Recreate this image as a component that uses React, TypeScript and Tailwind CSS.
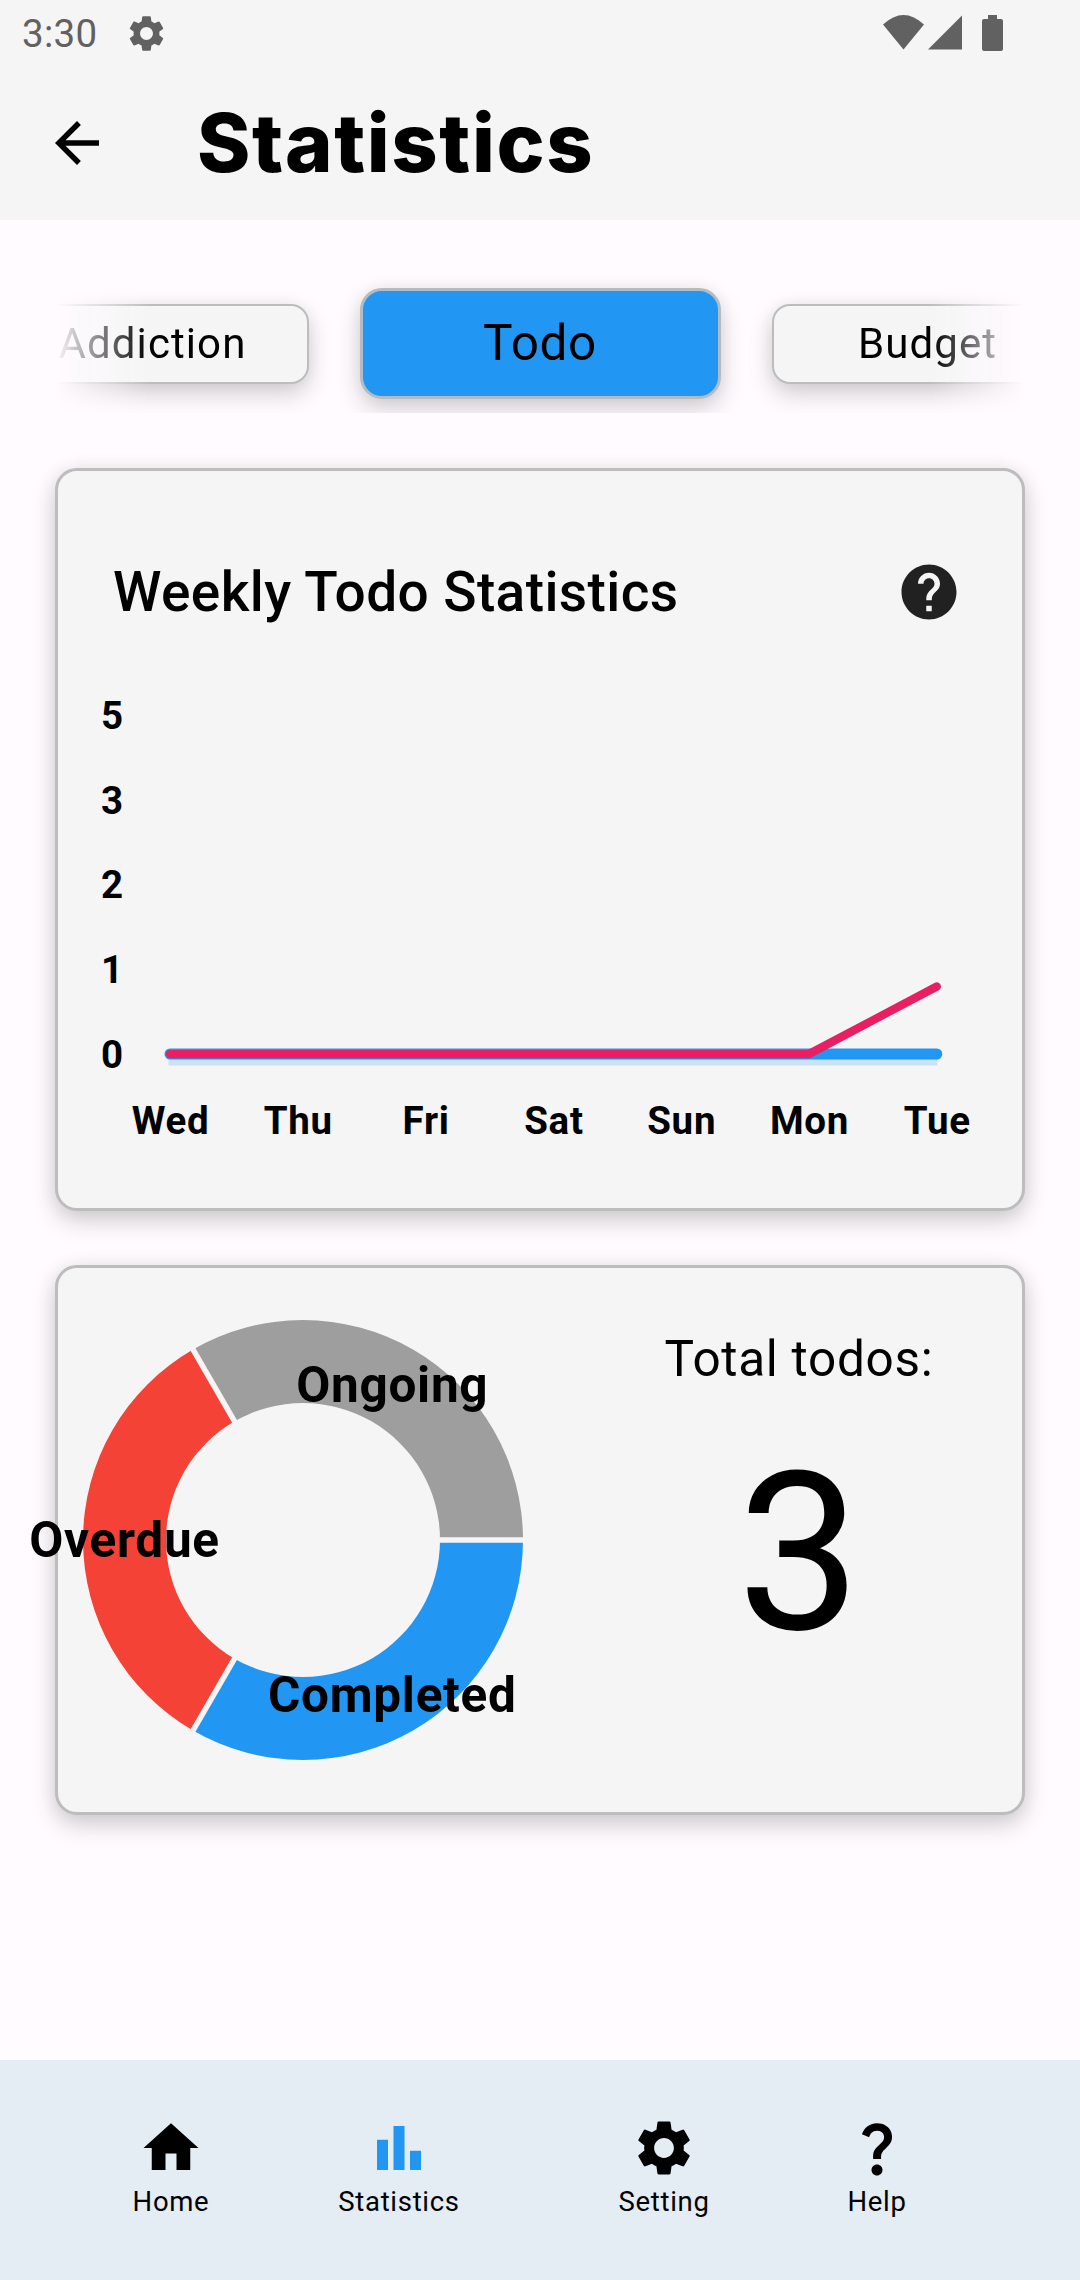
import type { ReactNode } from 'react'
import { MdArrowBack, MdBarChart, MdHelp, MdHome, MdQuestionMark, MdSettings } from 'react-icons/md'

const POINTS = [
  { day: 'Wed', done: 0, overdue: 0 },
  { day: 'Thu', done: 0, overdue: 0 },
  { day: 'Fri', done: 0, overdue: 0 },
  { day: 'Sat', done: 0, overdue: 0 },
  { day: 'Sun', done: 0, overdue: 0 },
  { day: 'Mon', done: 0, overdue: 0 },
  { day: 'Tue', done: 0, overdue: 1 },
]

const Y_LABELS = ['5', '3', '2', '1', '0']

// angles are clockwise from 3 o'clock, each slice spans a third
const SLICES = [
  { label: 'Completed', color: '#2196f3', from: 0 },
  { label: 'Overdue', color: '#f44336', from: 120 },
  { label: 'Ongoing', color: '#9e9e9e', from: 240 },
]

const SHADOW = 'shadow-[0_10px_24px_rgba(0,0,0,0.18),0_0_20px_rgba(0,0,0,0.06)]'

export default function App() {
  return (
    <div className="flex h-[2280px] w-[1080px] flex-col overflow-hidden bg-[#fffbff] font-[Roboto,sans-serif] text-black">
      <header className="h-[220px] bg-[#f5f5f5]">
        <StatusBar />
        <div className="flex h-[150px] items-center pl-[44px]">
          <MdArrowBack size={66} />
          <h1 className="ml-[87px] font-[Inter,sans-serif] text-[81px] leading-none font-extrabold tracking-[1.6px]">Statistics</h1>
        </div>
      </header>

      <Tabs />

      <main className="mt-[55px] flex flex-col gap-[54px] px-[55px]">
        <WeeklyCard />
        <TotalCard />
      </main>

      <NavBar />
    </div>
  )
}

function StatusBar() {
  return (
    <div className="flex h-[68px] items-center pl-[22px] text-[#616161]">
      <span className="text-[38.5px] leading-none tracking-[0.3px]">3:30</span>
      <MdSettings size={43} className="mt-[-1px] ml-[28px]" />
      <svg className="mt-[-2px] ml-auto mr-[76px]" width="122" height="38" viewBox="882 14 122 38" fill="currentColor">
        <path d="M883 24.5Q903.5 5.5 924 24.5L903.5 49.5Z" />
        <path d="M928 49.5L962 15.5V49.5Z" />
        <path d="M988 15H997V19H1001Q1003 19 1003 21V49Q1003 51 1001 51H984Q982 51 982 49V21Q982 19 984 19H988Z" />
      </svg>
    </div>
  )
}

function Tabs() {
  return (
    <div className="mx-[55px] mt-[54px] flex h-[139px] items-center justify-center gap-[51px] overflow-hidden [mask-image:linear-gradient(to_right,transparent_0px,black_94px,black_876px,transparent_970px)]">
      <SideTab label="Addiction" />
      <div className={`flex h-[111px] w-[361px] shrink-0 items-center justify-center rounded-[22px] border-[3px] border-[#b4bcc2] bg-[#2196f3] text-[49.5px] tracking-[0.6px] ${SHADOW}`}>
        Todo
      </div>
      <SideTab label="Budget" />
    </div>
  )
}

function SideTab({ label }: { label: string }) {
  return (
    <div className={`mt-px flex h-[80px] w-[312px] shrink-0 items-center justify-center rounded-[18px] border-2 border-[#bdbdbd] bg-[#f5f5f5] pb-[2px] text-[42px] tracking-[1.1px] ${SHADOW}`}>
      {label}
    </div>
  )
}

function WeeklyCard() {
  const x = (i: number) => 115 + i * 127.8
  const y = (v: number) => 386 - v * 67.5
  const path = (key: 'done' | 'overdue') => POINTS.map((p, i) => `${i ? 'L' : 'M'}${x(i)} ${y(p[key])}`).join('')

  return (
    <section className={`h-[743px] rounded-[22px] border-[3px] border-[#bdbdbd] bg-[#f5f5f5] ${SHADOW}`}>
      <div className="flex items-center justify-between pt-[88px] pr-[60px] pl-[55px]">
        <h2 className="text-[55px] leading-[66px] font-medium tracking-[0.4px]">Weekly Todo Statistics</h2>
        <MdHelp size={66} className="text-[#212121]" />
      </div>
      <svg className="-ml-[3px] mt-[43px]" width="970" height="500" viewBox="0 0 970 500">
        <rect x={113.5} y={386} width={769} height={11.5} fill="#2196f3" fillOpacity="0.2" />
        <path d={path('done')} fill="none" stroke="#2196f3" strokeWidth="11" strokeLinecap="round" />
        <path d={path('overdue')} fill="none" stroke="#e91e63" strokeWidth="8.25" strokeLinecap="round" />
        <g fontSize="38.5" fontWeight="700" textAnchor="middle" className="tracking-[0.7px]">
          {Y_LABELS.map((l, i) => (
            <text key={l} x={57.3} y={61 + i * 84.7}>{l}</text>
          ))}
          {POINTS.map((p, i) => (
            <text key={p.day} x={x(i) + 0.5} y={466}>{p.day}</text>
          ))}
        </g>
      </svg>
    </section>
  )
}

function Donut() {
  const at = (r: number, deg: number) => {
    const a = (deg * Math.PI) / 180
    return [220 + r * Math.cos(a), 220 + r * Math.sin(a)]
  }
  return (
    <svg className="overflow-visible" width="440" height="440" viewBox="0 0 440 440">
      {SLICES.map(s => (
        <path
          key={s.label}
          d={`M${at(220, s.from)}A220 220 0 0 1 ${at(220, s.from + 120)}L${at(137, s.from + 120)}A137 137 0 0 0 ${at(137, s.from)}Z`}
          fill={s.color}
        />
      ))}
      {SLICES.map(s => (
        <path key={s.label} d={`M${at(134, s.from)}L${at(223, s.from)}`} stroke="#f5f5f5" strokeWidth="5.5" />
      ))}
      {SLICES.map(s => {
        const [cx, cy] = at(178.5, s.from + 60)
        return (
          <text key={s.label} x={cx} y={cy + 17} fontSize="49.5" fontWeight="700" textAnchor="middle" className="tracking-[0.7px]">{s.label}</text>
        )
      })}
    </svg>
  )
}

function TotalCard() {
  return (
    <section className={`flex h-[550px] rounded-[22px] border-[3px] border-[#bdbdbd] bg-[#f5f5f5] pt-[52px] pl-[25px] ${SHADOW}`}>
      <Donut />
      <div className="ml-[76px] flex w-[400px] flex-col items-center pt-[10px]">
        <div className="text-[49.5px] leading-[58px] tracking-[0.7px]">Total todos:</div>
        <div className="mt-[37px] text-[220px] leading-[258px]">3</div>
      </div>
    </section>
  )
}

function NavBar() {
  return (
    <nav className="mt-auto flex h-[220px] bg-[#e4ecf4] pt-[55px] text-[27.5px] leading-[32px] tracking-[0.7px]">
      <NavItem icon={<MdHome size={66} />} label="Home" className="ml-[71px] w-[200px]" />
      <NavItem icon={<MdBarChart size={66} className="text-[#2196f3]" />} label="Statistics" className="ml-[28px] w-[200px]" />
      <NavItem icon={<MdSettings size={66} />} label="Setting" className="ml-[65px] w-[200px]" />
      <NavItem icon={<MdQuestionMark size={66} />} label="Help" className="ml-[13px] w-[200px]" />
    </nav>
  )
}

function NavItem({ icon, label, className }: { icon: ReactNode; label: string; className: string }) {
  return (
    <div className={`flex flex-col items-center gap-[5px] ${className}`}>
      {icon}
      <span>{label}</span>
    </div>
  )
}
